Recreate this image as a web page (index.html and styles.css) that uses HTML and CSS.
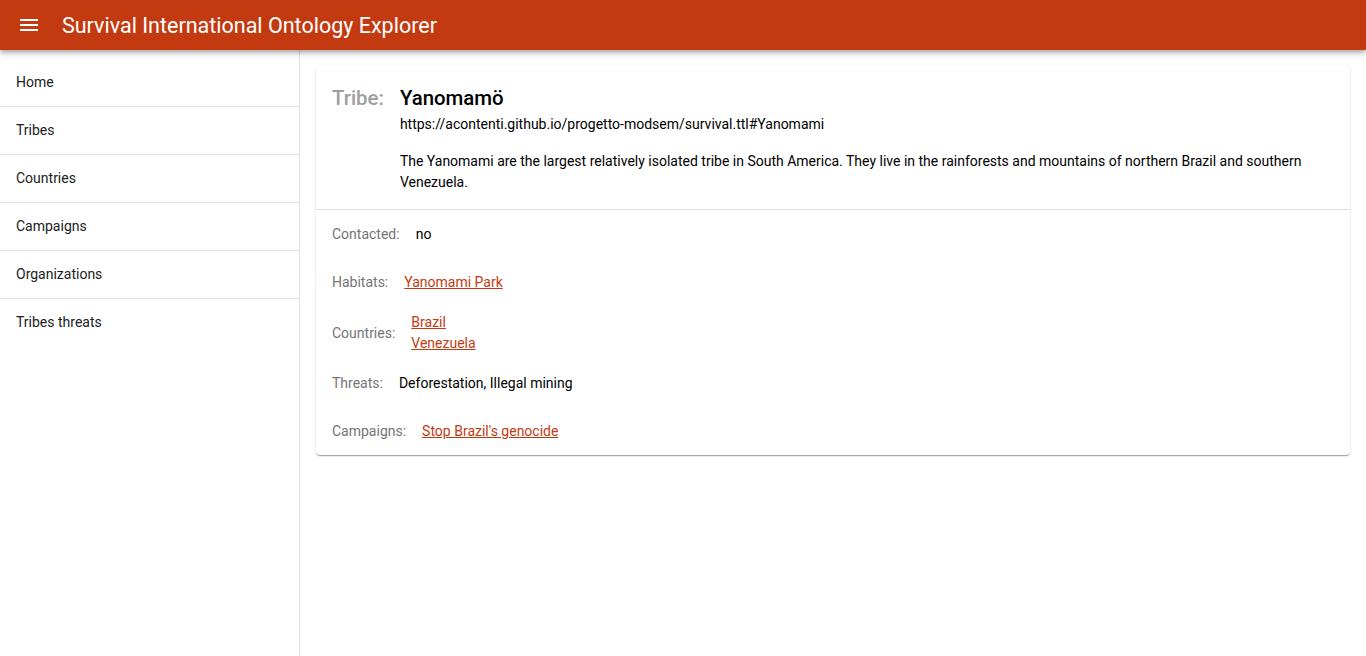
FILE: index.html
```html
<!DOCTYPE html>
<html lang="en">
<head>
<meta charset="utf-8">
<title>Survival International Ontology Explorer</title>
<link rel="stylesheet" href="styles.css">
</head>
<body>
<header class="topbar">
  <button class="menu-btn" aria-label="Menu">
    <svg width="24" height="24" viewBox="0 0 24 24"><path fill="#fff" d="M3 18h18v-2H3v2zm0-5h18v-2H3v2zm0-7v2h18V6H3z"/></svg>
  </button>
  <h1 class="title">Survival International Ontology Explorer</h1>
</header>
<div class="layout">
  <nav class="sidebar">
    <ul class="nav-list">
      <li class="nav-item">Home</li>
      <li class="nav-item">Tribes</li>
      <li class="nav-item">Countries</li>
      <li class="nav-item">Campaigns</li>
      <li class="nav-item">Organizations</li>
      <li class="nav-item">Tribes threats</li>
    </ul>
  </nav>
  <main class="content">
    <section class="card">
      <div class="card-head">
        <div class="kind">Tribe:</div>
        <div class="head-main">
          <div class="name">Yanomamö</div>
          <div class="uri">https://acontenti.github.io/progetto-modsem/survival.ttl#Yanomami</div>
          <p class="desc">The Yanomami are the largest relatively isolated tribe in South America. They live in the rainforests and mountains of northern Brazil and southern Venezuela.</p>
        </div>
      </div>
      <div class="card-body">
        <div class="row"><span class="label">Contacted:</span><span class="value">no</span></div>
        <div class="row"><span class="label">Habitats:</span><span class="value"><a href="#" class="link">Yanomami Park</a></span></div>
        <div class="row multi"><span class="label">Countries:</span><span class="value values"><a href="#" class="link">Brazil</a><a href="#" class="link">Venezuela</a></span></div>
        <div class="row"><span class="label">Threats:</span><span class="value">Deforestation, Illegal mining</span></div>
        <div class="row"><span class="label">Campaigns:</span><span class="value"><a href="#" class="link">Stop Brazil's genocide</a></span></div>
      </div>
    </section>
  </main>
</div>
</body>
</html>
```
FILE: styles.css
```css
* { box-sizing: border-box; }
html, body { margin: 0; padding: 0; height: 100%; }
body {
  font-family: Roboto, "Noto Sans", sans-serif;
  color: #000;
  background: #fff;
  font-size: 14px;
  display: flex;
  flex-direction: column;
  overflow: hidden;
}
.topbar {
  height: 50px;
  flex: none;
  background: #c43a10;
  color: #fff;
  display: flex;
  align-items: center;
  padding-left: 17px;
  box-shadow: 0 2px 4px -1px rgba(0,0,0,.2), 0 4px 5px 0 rgba(0,0,0,.14), 0 1px 10px 0 rgba(0,0,0,.12);
  position: relative;
  z-index: 2;
}
.menu-btn {
  border: 0;
  background: none;
  padding: 0;
  width: 24px;
  height: 24px;
  display: block;
  margin-right: 21px;
}
.menu-btn svg { display: block; }
.title {
  margin: 0;
  font-size: 21.5px;
  font-weight: 400;
  line-height: 26px;
  padding-top: 1px;
}
.layout {
  flex: 1;
  display: flex;
  min-height: 0;
}
.sidebar {
  width: 300px;
  flex: none;
  border-right: 1px solid #e0e0e0;
  background: #fff;
}
.nav-list {
  list-style: none;
  margin: 0;
  padding: 9px 0 0;
}
.nav-item {
  height: 48px;
  line-height: 47px;
  padding: 0 16px;
  border-bottom: 1px solid #e0e0e0;
  font-size: 14px;
  color: #212121;
}
.nav-item:last-child { border-bottom: 0; }
.content {
  flex: 1;
  padding: 16px;
}
.card {
  background: #fff;
  border-radius: 4px;
  box-shadow: 0 2px 1px -1px rgba(0,0,0,.2), 0 1px 1px 0 rgba(0,0,0,.14), 0 1px 3px 0 rgba(0,0,0,.12);
}
.card-head {
  display: flex;
  padding: 16px 16px;
  border-bottom: 1px solid #e0e0e0;
}
.kind {
  font-size: 20.4px;
  font-weight: 500;
  line-height: 32px;
  color: #9e9e9e;
  margin-right: 16px;
}
.head-main { flex: 1; }
.name {
  font-size: 20.4px;
  line-height: 32px;
  font-weight: 500;
}
.uri {
  font-size: 14px;
  line-height: 20px;
}
.desc {
  margin: 16.5px 0 0;
  font-size: 14px;
  line-height: 21px;
}
.card-body { padding: 0; }
.row {
  display: flex;
  align-items: center;
  min-height: 48px;
  padding: 0 16px;
  font-size: 14px;
  line-height: 20px;
}
.row.multi { padding: 6px 16px 5px; }
.label {
  color: #757575;
  margin-right: 16px;
}
.values {
  display: flex;
  flex-direction: column;
  line-height: 21px;
}
.link {
  color: #c43a10;
  text-decoration: underline;
}
```
